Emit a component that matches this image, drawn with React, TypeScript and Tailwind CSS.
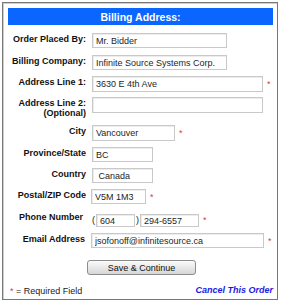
import React from "react";

const font = { fontFamily: '"Liberation Sans", Arial, sans-serif' };

function Star({ className = "" }: { className?: string }) {
  return (
    <span className={"text-[9px] leading-[10px] text-[#e23b3b] ml-[4px] mt-[1px] " + className}>*</span>
  );
}

function Field({ value, w, h = 15, extra = "" }: { value: string; w: number; h?: number; extra?: string }) {
  return (
    <input
      readOnly
      value={value}
      style={{ width: w, height: h }}
      className={
        "block border border-[#c9c9c9] bg-white px-[3px] text-[9px] leading-[10px] text-[#1e1e1e] outline-none shadow-[inset_1px_1px_0_#ececec] " +
        extra
      }
    />
  );
}

function Label({ children }: { children: React.ReactNode }) {
  return (
    <div className="w-[83px] shrink-0 text-right text-[9px] leading-[10px] font-bold text-[#111] mt-[1px]">
      {children}
    </div>
  );
}

export default function App() {
  return (
    <div style={font} className="w-[283px] h-[307px] bg-white overflow-hidden">
      <div className="ml-[2px] mt-[2px] w-[276px] h-[298px] border border-[#777] shadow-[inset_1px_1px_0_#cfcfcf] flex flex-col">
        <div className="ml-[5px] mt-[5px] w-[265px] h-[17px] bg-[#0a66ff] flex items-center justify-center text-white font-bold text-[10.5px] leading-[12px]">
          Billing Address:
        </div>

        <div className="flex items-start gap-[6px] mt-[8px]">
          <Label>Order Placed By:</Label>
          <Field value="Mr. Bidder" w={135} />
        </div>

        <div className="flex items-start gap-[6px] mt-[7px]">
          <Label>Billing Company:</Label>
          <Field value="Infinite Source Systems Corp." w={135} />
        </div>

        <div className="flex items-start gap-[6px] mt-[6px]">
          <Label>Address Line 1:</Label>
          <div className="flex items-start">
            <Field value="3630 E 4th Ave" w={171} h={16} />
            <Star className="mt-[3px]" />
          </div>
        </div>

        <div className="flex items-start gap-[6px] mt-[5px]">
          <Label>
            Address Line 2:
            <br />
            (Optional)
          </Label>
          <Field value="" w={171} h={16} />
        </div>

        <div className="flex items-start gap-[6px] mt-[7px]">
          <Label>City</Label>
          <div className="flex items-start">
            <Field value="Vancouver" w={83} h={16} />
            <Star className="mt-[3px]" />
          </div>
        </div>

        <div className="flex items-start gap-[6px] mt-[6px]">
          <Label>Province/State</Label>
          <Field value="BC" w={61} />
        </div>

        <div className="flex items-start gap-[6px] mt-[6px]">
          <Label>Country</Label>
          <Field value=" Canada" w={61} extra="whitespace-pre" />
        </div>

        <div className="flex items-start gap-[6px] mt-[6px]">
          <Label>Postal/ZIP Code</Label>
          <div className="flex items-start -ml-[1px]">
            <Field value="V5M 1M3" w={55} />
            <Star className="mt-[3px]" />
          </div>
        </div>

        <div className="flex items-start gap-[6px] mt-[8px]">
          <div className="w-[83px] shrink-0 text-right text-[9px] leading-[10px] font-bold text-[#111] pr-[3px]">
            Phone Number
          </div>
          <div className="flex items-start mt-[2px]">
            <span className="text-[9px] leading-[12px] text-[#222] w-[4px]">(</span>
            <Field value="604" w={39} h={13} />
            <span className="text-[9px] leading-[12px] text-[#222] w-[5px] pl-[1px]">)</span>
            <Field value="294-6557" w={59} h={13} />
            <Star className="mt-[1px]" />
          </div>
        </div>

        <div className="flex items-start gap-[6px] mt-[6px]">
          <div className="w-[83px] shrink-0 text-right text-[9px] leading-[10px] font-bold text-[#111] mt-[1px] pr-[1px]">
            Email Address
          </div>
          <div className="flex items-start -ml-[1px]">
            <Field value="jsofonoff@infinitesource.ca" w={173} />
            <Star className="mt-[3px]" />
          </div>
        </div>

        <button className="mt-[12px] ml-[84px] w-[109px] h-[15px] rounded-[3px] border border-[#8c8c8c] bg-gradient-to-b from-[#fbfbfb] to-[#d6d6d6] text-[9px] leading-[10px] text-[#111] flex items-center justify-center">
          Save &amp; Continue
        </button>

        <div className="mt-[11px] flex items-start justify-between pl-[7px] pr-[4px]">
          <div className="text-[9px] leading-[10px] text-[#222]">
            <span className="text-[#e23b3b]">*</span> = Required Field
          </div>
          <div className="text-[9px] leading-[10px] font-bold italic text-[#1a1ae6] -mt-[1px]">
            Cancel This Order
          </div>
        </div>
      </div>
    </div>
  );
}
